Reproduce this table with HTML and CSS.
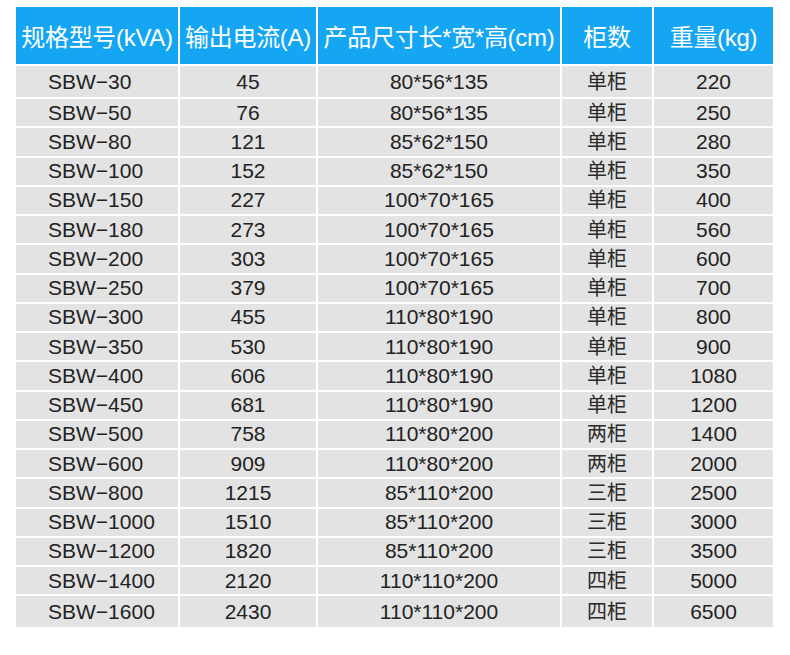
FILE: index.html
```html
<!DOCTYPE html>
<html lang="zh-CN">
<head>
<meta charset="utf-8">
<title>SBW 规格表</title>
<link rel="stylesheet" href="styles.css">
</head>
<body>
<div class="spec">
  <div class="th">规格型号(kVA)</div><div class="th">输出电流(A)</div><div class="th">产品尺寸长*宽*高(cm)</div><div class="th">柜数</div><div class="th">重量(kg)</div>
  <div class="td first">SBW−30</div><div class="td">45</div><div class="td">80*56*135</div><div class="td cjk">单柜</div><div class="td">220</div>
  <div class="td first">SBW−50</div><div class="td">76</div><div class="td">80*56*135</div><div class="td cjk">单柜</div><div class="td">250</div>
  <div class="td first">SBW−80</div><div class="td">121</div><div class="td">85*62*150</div><div class="td cjk">单柜</div><div class="td">280</div>
  <div class="td first">SBW−100</div><div class="td">152</div><div class="td">85*62*150</div><div class="td cjk">单柜</div><div class="td">350</div>
  <div class="td first">SBW−150</div><div class="td">227</div><div class="td">100*70*165</div><div class="td cjk">单柜</div><div class="td">400</div>
  <div class="td first">SBW−180</div><div class="td">273</div><div class="td">100*70*165</div><div class="td cjk">单柜</div><div class="td">560</div>
  <div class="td first">SBW−200</div><div class="td">303</div><div class="td">100*70*165</div><div class="td cjk">单柜</div><div class="td">600</div>
  <div class="td first">SBW−250</div><div class="td">379</div><div class="td">100*70*165</div><div class="td cjk">单柜</div><div class="td">700</div>
  <div class="td first">SBW−300</div><div class="td">455</div><div class="td">110*80*190</div><div class="td cjk">单柜</div><div class="td">800</div>
  <div class="td first">SBW−350</div><div class="td">530</div><div class="td">110*80*190</div><div class="td cjk">单柜</div><div class="td">900</div>
  <div class="td first">SBW−400</div><div class="td">606</div><div class="td">110*80*190</div><div class="td cjk">单柜</div><div class="td">1080</div>
  <div class="td first">SBW−450</div><div class="td">681</div><div class="td">110*80*190</div><div class="td cjk">单柜</div><div class="td">1200</div>
  <div class="td first">SBW−500</div><div class="td">758</div><div class="td">110*80*200</div><div class="td cjk">两柜</div><div class="td">1400</div>
  <div class="td first">SBW−600</div><div class="td">909</div><div class="td">110*80*200</div><div class="td cjk">两柜</div><div class="td">2000</div>
  <div class="td first">SBW−800</div><div class="td">1215</div><div class="td">85*110*200</div><div class="td cjk">三柜</div><div class="td">2500</div>
  <div class="td first">SBW−1000</div><div class="td">1510</div><div class="td">85*110*200</div><div class="td cjk">三柜</div><div class="td">3000</div>
  <div class="td first">SBW−1200</div><div class="td">1820</div><div class="td">85*110*200</div><div class="td cjk">三柜</div><div class="td">3500</div>
  <div class="td first">SBW−1400</div><div class="td">2120</div><div class="td">110*110*200</div><div class="td cjk">四柜</div><div class="td">5000</div>
  <div class="td first">SBW−1600</div><div class="td">2430</div><div class="td">110*110*200</div><div class="td cjk">四柜</div><div class="td">6500</div>
</div>
</body>
</html>
```
FILE: styles.css
```css
html, body {
  margin: 0;
  padding: 0;
  background: #ffffff;
}
body {
  padding: 7px 0 0 16px;
  font-family: "Liberation Sans", Arial, "Noto Sans CJK SC", sans-serif;
}
.spec {
  display: grid;
  width: 757px;
  grid-template-columns: 162px 136px 242px 90px 119px;
  grid-template-rows: 57px 31px repeat(17, 27.25px) 31px;
  gap: 2px;
  background: #ffffff;
}
.th {
  background: #15a6f3;
  color: #ffffff;
  font-size: 24px;
  display: flex;
  align-items: center;
  justify-content: center;
  white-space: nowrap;
  letter-spacing: -0.3px;
}
.td {
  background: #e3e3e3;
  color: #222222;
  font-size: 21px;
  display: flex;
  align-items: center;
  justify-content: center;
  white-space: nowrap;
}
.td.first {
  justify-content: flex-start;
  padding-left: 32px;
}
.td.cjk {
  font-family: "Noto Sans CJK SC", sans-serif;
  font-size: 20px;
  color: #2a2a2a;
  padding-bottom: 3px;
}
```
